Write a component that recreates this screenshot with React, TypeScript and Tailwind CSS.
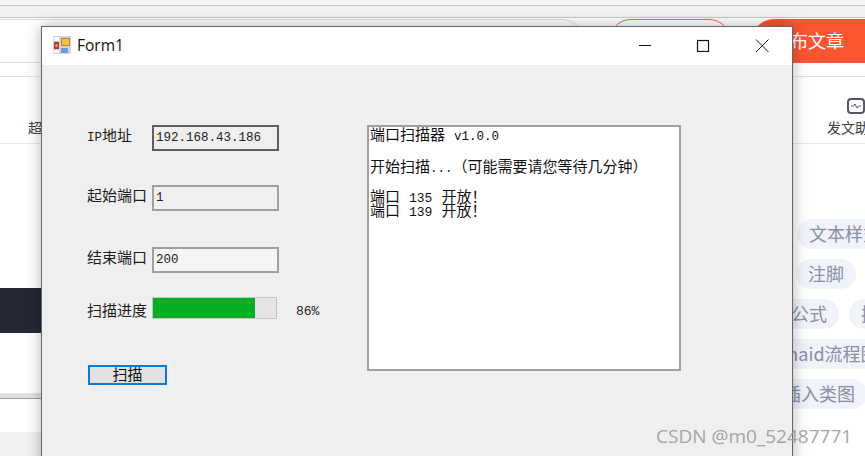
import React from 'react';

const cjk = "font-['Liberation_Mono','Noto_Sans_CJK_SC',monospace]";
const latin = 'text-[12.5px]';

const Chip: React.FC<{ label: string }> = ({ label }) => (
  <span className="shrink-0 h-[30px] rounded-[15px] bg-[#f0f3f9] px-3 text-[18px] leading-[28px] whitespace-nowrap text-[#8a8fa8] font-['Noto_Sans_CJK_SC',sans-serif]">
    {label}
  </span>
);

const Field: React.FC<{ label: React.ReactNode; value: string; boxClass: string }> = ({ label, value, boxClass }) => (
  <div className="flex items-center h-[26px]">
    <span className={`w-[65px] shrink-0 text-[15px] leading-[26px] whitespace-nowrap text-[#1c1c1c] ${cjk}`}>{label}</span>
    <div className={`w-[127px] h-[26px] pl-[2px] ${latin} leading-[22px] text-[#222] ${cjk} ${boxClass}`}>{value}</div>
  </div>
);

export default function App() {
  return (
    <div className="relative flex flex-col w-[865px] h-[456px] overflow-hidden bg-white">
      {/* page behind the form */}
      <div className="shrink-0 h-[6px] bg-[#f6f6f6] border-b border-[#c4c4c4]" />
      <div className="shrink-0 h-[12px] bg-[#f1f1f1] border-b border-[#c8c8c8]" />
      <div className="shrink-0 h-[59px] flex items-start pt-px bg-white border-b border-[#e4e4e4]">
        <div className="shrink-0 ml-[-20px] w-[604px] h-[44px] rounded-[22px] border border-[#dedede]" />
        <div className="shrink-0 ml-[25px] w-[122px] h-[44px] rounded-[22px] border border-[#f0694a]" />
        <div className="shrink-0 ml-[21px] w-[130px] h-[44px] rounded-l-[22px] bg-[#fc5531] pl-[38px] text-[18px] leading-[43px] text-white font-['Noto_Sans_CJK_SC',sans-serif]">
          布文章
        </div>
      </div>
      <div className="shrink-0 h-[67px] flex items-end justify-between pb-[7px] pl-[28px] bg-white border-b border-[#e8e8e8] text-[14px] leading-[18px] text-[#404040] font-['Noto_Sans_CJK_SC',sans-serif]">
        <span>超</span>
        <div className="flex flex-col w-[38px] shrink-0">
          <svg className="ml-[20px] mb-[4px]" width="18" height="16" viewBox="0 0 18 16" fill="none">
            <rect x="1" y="1" width="16" height="14" rx="3" stroke="#555666" strokeWidth="2" />
            <path d="M4 8h2.500l1.500-2 2 4 1.500-2H14" stroke="#555666" strokeWidth="1" />
          </svg>
          <span className="whitespace-nowrap">发文助</span>
        </div>
      </div>
      <div className="flex flex-1 min-h-0">
        <div className="w-[42px] shrink-0 flex flex-col pt-[144px]">
          <div className="h-[45px] bg-[#252833]" />
          <div className="mt-[60px] h-[6px] bg-[#e2e2e2] border-b border-[#9b9b9b]" />
          <div className="mt-[33px] flex-1 bg-[#f1f1f1]" />
        </div>
        <div className="ml-auto w-[145px] shrink-0 flex flex-col gap-[10px] pt-[75px]">
          <div className="flex ml-[77px]"><Chip label="文本样式" /></div>
          <div className="flex ml-[76px]"><Chip label="注脚" /></div>
          <div className="flex gap-[10px] ml-[59px]"><Chip label="公式" /><Chip label="插入" /></div>
          <div className="flex ml-[16px]"><Chip label="mermaid流程图" /></div>
          <div className="flex ml-[51px]"><Chip label="插入类图" /></div>
        </div>
      </div>

      {/* Form1 window */}
      <div className="absolute left-[41px] top-[26px] w-[752px] h-[440px] border border-[#666] bg-[#efefef] shadow-[0_0_14px_rgba(0,0,0,0.3)]">
        <div className="h-[38px] bg-white flex items-center pl-[11px] pb-[2px]">
          <svg width="18" height="18" viewBox="0 0 18 18" className="mr-[6px]">
            <rect width="18" height="18" fill="#d4d4d4" />
            <rect x="1" y="1" width="5" height="4" fill="#fff" />
            <rect x="1" y="6" width="5" height="7" fill="#b5352c" />
            <rect x="2.500" y="8" width="2" height="3" fill="#e8a0a0" />
            <rect x="8.500" y="2.500" width="8" height="7" fill="#f2c23e" stroke="#b98a1e" />
            <rect x="8" y="12" width="7" height="5" fill="#6d9be0" />
            <rect x="1" y="14" width="5" height="3" fill="#fff" />
          </svg>
          <span className="mt-[2px] text-[15.500px] text-[#111] font-['Open_Sans',sans-serif]">Form1</span>
          <svg className="ml-auto mr-[17px]" width="138" height="14" viewBox="0 0 138 14" fill="none" stroke="#111">
            <path d="M2 7.500H14" />
            <rect x="60.500" y="2.500" width="11" height="11" strokeWidth="1.200" />
            <path d="M119 1.500L131.500 14M131.500 1.500L119 14" />
          </svg>
        </div>

        <div className="flex pt-[60px] pl-[45px]">
          <div className="w-[280px]">
            <Field label={<><span className={latin}>IP</span>地址</>} value="192.168.43.186" boxClass="border-2 border-[#5e5e5e] bg-[#efefef]" />
            <div className="mt-[34px]">
              <Field label="起始端口" value="1" boxClass="border-2 border-[#a0a0a0] bg-[#efefef]" />
            </div>
            <div className="mt-[36px]">
              <Field label="结束端口" value="200" boxClass="border-2 border-[#a0a0a0] bg-[#f5f5f5]" />
            </div>
            <div className="mt-[24px] flex items-start h-[22px]">
              <span className={`w-[65px] shrink-0 pt-[5px] text-[15px] leading-[22px] whitespace-nowrap text-[#1c1c1c] ${cjk}`}>扫描进度</span>
              <div className="w-[125px] h-[22px] border border-[#c4c4c4] bg-[#e5e5e5]">
                <div className="w-[102px] h-full bg-[#06b025]" />
              </div>
              <span className={`ml-[19px] pt-[4px] text-[13px] leading-[22px] text-[#222] ${cjk}`}>86%</span>
            </div>
            <button className={`mt-[46px] ml-px w-[79px] h-[20px] border-2 border-[#0a7ad6] bg-[#e1e1e1] text-[15px] leading-[20px] text-[#111] ${cjk}`}>
              扫描
            </button>
          </div>
          <div className={`w-[314px] h-[246px] border-2 border-[#a0a0a0] bg-white pl-px pt-[2px] text-[15px] text-[#111] ${cjk}`}>
            <p className="leading-[16px] whitespace-nowrap">端口扫描器 <span className={latin}>v1.0.0</span></p>
            <p className="mt-[16px] leading-[16px] whitespace-nowrap">开始扫描<span className={latin}>...</span>（可能需要请您等待几分钟）</p>
            <p className="mt-[15px] leading-[14px] whitespace-nowrap">端口 <span className="text-[13px]">135</span> 开放！</p>
            <p className="leading-[14px] whitespace-nowrap">端口 <span className="text-[13px]">139</span> 开放！</p>
          </div>
        </div>
      </div>

      {/* watermark */}
      <span className="absolute left-[656px] top-[424px] text-[19px] leading-[24px] whitespace-nowrap text-[#9a9a9a]/90 font-['Open_Sans',sans-serif]">
        CSDN @m0_52487771
      </span>
    </div>
  );
}
